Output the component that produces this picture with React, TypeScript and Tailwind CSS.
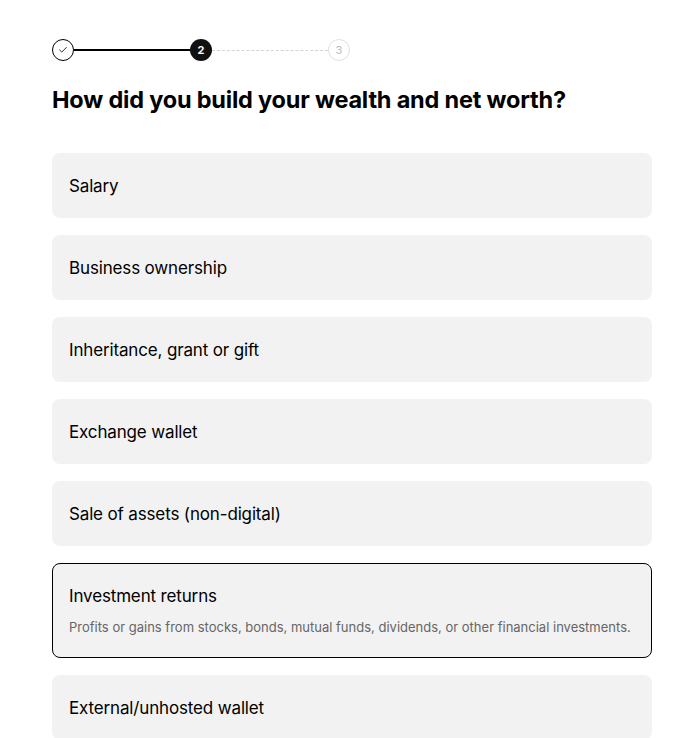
import { Check } from 'lucide-react';

const options = [
  { label: 'Salary' },
  { label: 'Business ownership' },
  { label: 'Inheritance, grant or gift' },
  { label: 'Exchange wallet' },
  { label: 'Sale of assets (non-digital)' },
  {
    label: 'Investment returns',
    description: 'Profits or gains from stocks, bonds, mutual funds, dividends, or other financial investments.',
    selected: true,
  },
  { label: 'External/unhosted wallet' },
];

const Stepper = () => (
  <div className="flex items-center w-[298px]">
    <div className="w-[22px] h-[22px] rounded-full border border-black bg-white flex items-center justify-center shrink-0">
      <Check size={10} strokeWidth={2} />
    </div>
    <div className="flex-1 h-[1.5px] bg-black" />
    <div className="w-[22px] h-[22px] rounded-full bg-[#111] text-white text-[11px] font-bold flex items-center justify-center shrink-0">
      2
    </div>
    <div className="flex-1 border-t border-dashed border-[#d4d4d4]" />
    <div className="w-[22px] h-[22px] rounded-full border border-[#e0e0e0] bg-white text-[#bdbdbd] text-[11px] flex items-center justify-center shrink-0">
      3
    </div>
  </div>
);

const App = () => {
  return (
    <div className="bg-white min-h-screen px-[52px] pt-[39px] font-['Inter','Liberation_Sans',sans-serif] text-black">
      <Stepper />
      <h1 className="mt-[24px] text-[23.5px] font-bold tracking-[-0.2px] leading-[30px]">
        How did you build your wealth and net worth?
      </h1>
      <div className="mt-[38px] flex flex-col gap-[17px] w-[600px]">
        {options.map((opt) => (
          <div
            key={opt.label}
            className={`rounded-lg bg-[#f2f2f2] px-4 flex flex-col justify-center border ${
              opt.selected ? 'border-black h-[95px]' : 'border-transparent h-[65px]'
            }`}
          >
            <span className="text-[17px] leading-[22px] tracking-[-0.15px]">{opt.label}</span>
            {opt.description && (
              <span className="mt-[11px] text-[13px] leading-[18px] text-[#666]">{opt.description}</span>
            )}
          </div>
        ))}
      </div>
    </div>
  );
};

export default App;
